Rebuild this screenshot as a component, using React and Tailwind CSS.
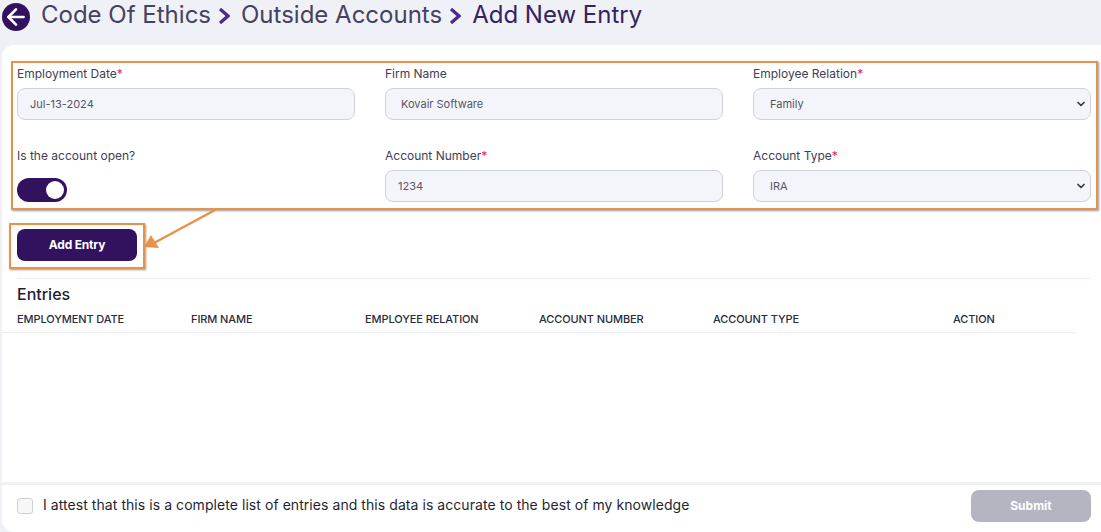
import { ChevronDown, ArrowLeft } from 'lucide-react'

const columns = [
  { label: 'EMPLOYMENT DATE', width: 'w-[174px]' },
  { label: 'FIRM NAME', width: 'w-[174px]' },
  { label: 'EMPLOYEE RELATION', width: 'w-[174px]' },
  { label: 'ACCOUNT NUMBER', width: 'w-[174px]' },
  { label: 'ACCOUNT TYPE', width: 'w-[240px]' },
  { label: 'ACTION', width: 'w-[123px]' },
]

function Label({ children, required }) {
  return (
    <div className="h-[14px] text-[12px] leading-[14px] text-[#3f3d56]">
      {children}
      {required && <span className="text-[#f0205c]">*</span>}
    </div>
  )
}

function Field({ label, required, value, pad = 'pl-[12px]' }) {
  return (
    <div className="flex flex-col gap-[7px]">
      <Label required={required}>{label}</Label>
      <div className={`flex h-[32px] items-center rounded-[8px] border border-[#cfd2dc] bg-[#f4f5fb] ${pad} text-[11px] text-[#555566]`}>
        {value}
      </div>
    </div>
  )
}

function SelectField({ label, required, value }) {
  return (
    <div className="flex flex-col gap-[7px]">
      <Label required={required}>{label}</Label>
      <div className="flex h-[32px] items-center justify-between rounded-[8px] border border-[#cfd2dc] bg-[#f4f5fb] pl-[16px] pr-[3px] text-[11px] text-[#555566]">
        {value}
        <ChevronDown className="h-[12px] w-[12px] text-[#3a3a44]" strokeWidth={3.5} />
      </div>
    </div>
  )
}

function Chevron() {
  return (
    <svg className="ml-[7px] mr-[11px] mt-[2px] shrink-0" width="12" height="18" viewBox="0 0 12 18" fill="none">
      <polyline points="2,2 10,9 2,16" stroke="#4b2a8a" strokeWidth="3.2" />
    </svg>
  )
}

export default function App() {
  return (
    <div className="flex h-[532px] w-[1101px] flex-col overflow-hidden bg-[#f0f1f7] font-['Inter',sans-serif]">
      <header className="flex h-[45px] shrink-0 items-start gap-[11px] pl-[2px] pt-[3px]">
        <span className="flex h-[28px] w-[28px] items-center justify-center rounded-full bg-[#32125f] text-white">
          <ArrowLeft className="h-[26px] w-[26px]" strokeWidth={2.4} />
        </span>
        <div className="-mt-[1px] flex h-[26px] items-center text-[24px] leading-[26px] text-[#44425f]">
          <span>Code Of Ethics</span>
          <Chevron />
          <span>Outside Accounts</span>
          <Chevron />
          <span className="text-[#33235f]">Add New Entry</span>
        </div>
      </header>

      <main className="relative ml-[2px] flex flex-1 flex-col rounded-l-[12px] bg-white">
        <div className="grid grid-cols-[338px_338px_338px] gap-x-[30px] gap-y-[29px] pl-[15px] pt-[22px]">
          <Field label="Employment Date" required value="Jul-13-2024" />
          <Field label="Firm Name" value="Kovair Software" pad="pl-[15px]" />
          <SelectField label="Employee Relation" required value="Family" />

          <div className="flex flex-col gap-[7px]">
            <Label>Is the account open?</Label>
            <div className="flex h-[32px] items-end">
              <div className="flex h-[24px] w-[50px] items-center justify-end rounded-full bg-[#32125f] pr-[3px]">
                <span className="h-[18px] w-[18px] rounded-full bg-white" />
              </div>
            </div>
          </div>
          <Field label="Account Number" required value="1234" />
          <SelectField label="Account Type" required value="IRA" />
        </div>

        <div className="pl-[15px] pt-[27px]">
          <button type="button" className="h-[32px] w-[120px] rounded-[8px] bg-[#32125f] text-[12px] font-bold tracking-[-0.2px] text-white">
            Add Entry
          </button>
        </div>

        <div className="ml-[15px] mr-[11px] mt-[17px] border-t border-[#ebebf7] pt-[7px] text-[16px] font-medium leading-[17px] text-[#1f1f33]">
          Entries
        </div>
        <div className="mr-[25px] mt-[10px] flex h-[20px] border-b border-[#ebebf7] pl-[15px] text-[11px] font-medium leading-[13px] tracking-[-0.1px] text-[#2b2b3d]">
          {columns.map((c) => (
            <div key={c.label} className={c.width}>{c.label}</div>
          ))}
        </div>

        <div className="flex-1" />

        <footer className="flex h-[50px] shrink-0 items-center justify-between border-t-[3px] border-[#f0f1f7] pb-[5px] pl-[15px] pr-[10px]">
          <label className="flex items-center gap-[10px] text-[14px] tracking-[0.06px] text-[#1f1f33]">
            <span className="h-[16px] w-[16px] rounded-[3px] border border-[#cfd0d6] bg-[#f7f7f8]" />
            <span className="pb-[3px]">I attest that this is a complete list of entries and this data is accurate to the best of my knowledge</span>
          </label>
          <button type="button" className="h-[32px] w-[120px] rounded-[8px] bg-[#b5b4c1] text-[12px] font-bold text-white">
            Submit
          </button>
        </footer>

        {/* annotation overlays */}
        <div className="pointer-events-none absolute left-[9px] top-[16px] h-[149px] w-[1087px] border-[2px] border-[#e8914a] shadow-[1px_1px_2px_rgba(0,0,0,0.4)]" />
        <div className="pointer-events-none absolute left-[7px] top-[178px] h-[46px] w-[136px] border-[2px] border-[#e8914a] shadow-[1px_1px_2px_rgba(0,0,0,0.4)]" />
        <svg className="pointer-events-none absolute left-[140px] top-[163px]" width="80" height="50" viewBox="0 0 80 50">
          <line x1="75" y1="1" x2="12" y2="35" stroke="#e8914a" strokeWidth="2.4" />
          <polygon points="2,39 9,27 17,40" fill="#e8914a" />
        </svg>
      </main>
    </div>
  )
}
